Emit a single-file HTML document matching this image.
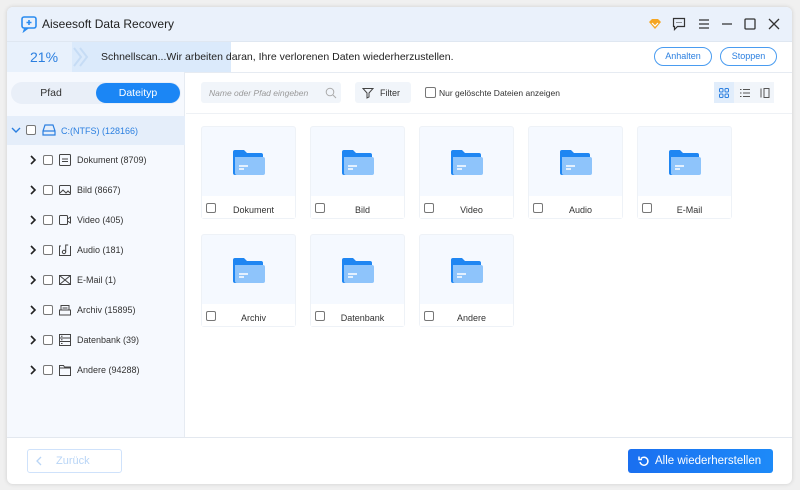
<!DOCTYPE html><html><head><style>
*{box-sizing:border-box;margin:0;padding:0}
body{width:800px;height:490px;background:#f0f0f0;font-family:"Liberation Sans",sans-serif;position:relative;overflow:hidden}
.win{position:absolute;left:7px;top:7px;width:785px;height:477px;background:#fff;border-radius:6px;overflow:hidden;box-shadow:0 0 4px rgba(0,0,0,.15)}
.a{position:absolute}
.cb{position:absolute;width:10px;height:10px;border:1px solid #777;border-radius:2px;background:#fff}
.side{left:0;top:65px;width:178px;height:365px;background:#f6f9fe;border-right:1px solid #e6ebf2}
.row{position:absolute;left:0;width:178px;height:30px;font-size:9px;color:#333}
.row span{position:absolute;top:10px}
.row .ch{position:absolute;left:22px;top:9px}
.card{position:absolute;width:95px;height:93px;background:#f5f9ff;border:1px solid #eef2f7;border-radius:3px}
.card .lb{position:absolute;left:0;right:0;bottom:0;height:22px;background:#fff;font-size:9px;color:#333;text-align:center;line-height:28px;padding-left:10px}
.card .cb{left:4px;top:6px}
</style></head><body>
<div class="win">
<div class="a" style="left:0;top:0;width:785px;height:35px;background:#eaf1fb;border-bottom:1px solid #dfe7f1"></div>
<svg class="a" style="left:13px;top:8px" width="18" height="18" viewBox="0 0 18 18"><rect x="2" y="2" width="14" height="11" rx="2" fill="none" stroke="#2b8cf0" stroke-width="1.6"/><path d="M9 5v5M6.5 7.5h5M5 13l-1 3 4-3" stroke="#2b8cf0" stroke-width="1.6" fill="none"/></svg>
<div class="a" style="left:35px;top:10px;font-size:12px;color:#222">Aiseesoft Data Recovery</div>
<svg class="a" style="left:640px;top:10px" width="16" height="14"><path d="M2 5l3-3h6l3 3-6 7z" fill="#f5a623"/><path d="M5 6l3 3 3-3" stroke="#fff" stroke-width="1.2" fill="none"/></svg>
<svg class="a" style="left:665px;top:10px" width="14" height="14"><path d="M1.5 1.5h11v8h-7l-3 3v-3h-1z" fill="none" stroke="#333" stroke-width="1.2"/><path d="M4.5 5.5h1M6.5 5.5h1M8.5 5.5h1" stroke="#333"/></svg>
<svg class="a" style="left:690px;top:10px" width="14" height="14"><path d="M2 3h10M2 7h10M2 11h10" stroke="#333" stroke-width="1.3"/></svg>
<svg class="a" style="left:713px;top:10px" width="14" height="14"><path d="M2 7h10" stroke="#333" stroke-width="1.3"/></svg>
<svg class="a" style="left:736px;top:10px" width="14" height="14"><rect x="2" y="2" width="10" height="10" rx="1" fill="none" stroke="#333" stroke-width="1.3"/></svg>
<svg class="a" style="left:760px;top:10px" width="14" height="14"><path d="M2 2l10 10M12 2L2 12" stroke="#333" stroke-width="1.3"/></svg>
<div class="a" style="left:0;top:35px;width:224px;height:30px;background:#dbeafb"></div>
<div class="a" style="left:0;top:35px;width:65px;height:30px;background:#e8f1fc"></div>
<div class="a" style="left:23px;top:42px;font-size:14px;color:#2b7fe0">21%</div>
<svg class="a" style="left:64px;top:35px" width="20" height="30"><path d="M3 6l7 9-7 9M9 6l7 9-7 9" stroke="#c6dcf5" stroke-width="2" fill="none"/></svg>
<div class="a" style="left:94px;top:44px;font-size:10.5px;color:#222">Schnellscan...Wir arbeiten daran, Ihre verlorenen Daten wiederherzustellen.</div>
<div class="a" style="left:647px;top:40px;width:58px;height:19px;border:1px solid #4a9cf0;border-radius:10px;font-size:9px;color:#2b7fe0;text-align:center;line-height:17px">Anhalten</div>
<div class="a" style="left:713px;top:40px;width:57px;height:19px;border:1px solid #4a9cf0;border-radius:10px;font-size:9px;color:#2b7fe0;text-align:center;line-height:17px">Stoppen</div>
<div class="a" style="left:0;top:65px;width:785px;height:1px;background:#e6ebf2"></div>
<div class="a side"></div>
<div class="a" style="left:4px;top:75px;width:170px;height:22px;background:#e9eff8;border-radius:11px"></div>
<div class="a" style="left:4px;top:75px;width:80px;height:22px;font-size:10.5px;color:#333;text-align:center;line-height:22px">Pfad</div>
<div class="a" style="left:89px;top:76px;width:84px;height:20px;background:#1b86f5;border-radius:10px;font-size:10.5px;color:#fff;text-align:center;line-height:20px">Dateityp</div>
<div class="a" style="left:0;top:109px;width:178px;height:29px;background:#e5eefa"></div>
<svg class="a" style="left:4px;top:119px" width="10" height="8"><path d="M1 2l4 4 4-4" stroke="#2b7fe0" stroke-width="1.4" fill="none"/></svg>
<div class="cb" style="left:19px;top:118px"></div>
<svg class="a" style="left:34px;top:116px" width="16" height="14"><path d="M2 8l2-6h8l2 6v4H2z M2 8h12" fill="none" stroke="#2b7fe0" stroke-width="1.2"/></svg>
<div class="a" style="left:54px;top:119px;font-size:9px;color:#2b7fe0">C:(NTFS) (128166)</div>
<div id="rows"></div>
<div class="a" style="left:194px;top:75px;width:140px;height:21px;background:#f1f5fa;border-radius:3px"></div>
<div class="a" style="left:202px;top:81px;font-size:8.5px;font-style:italic;color:#999">Name oder Pfad eingeben</div>
<svg class="a" style="left:318px;top:80px" width="12" height="12"><circle cx="5" cy="5" r="3.8" fill="none" stroke="#aaa"/><path d="M8 8l3 3" stroke="#aaa"/></svg>
<div class="a" style="left:348px;top:75px;width:56px;height:21px;background:#f1f5fa;border-radius:3px"></div>
<svg class="a" style="left:355px;top:80px" width="12" height="12"><path d="M1 1.5h10L7 6v4L5 11V6z" fill="none" stroke="#444"/></svg>
<div class="a" style="left:373px;top:81px;font-size:9px;color:#333">Filter</div>
<div class="cb" style="left:418px;top:80px;width:11px;height:11px"></div>
<div class="a" style="left:432px;top:81px;font-size:8.5px;color:#333">Nur gelöschte Dateien anzeigen</div>
<div class="a" style="left:707px;top:75px;width:60px;height:21px;background:#f1f5fa"></div>
<div class="a" style="left:707px;top:75px;width:20px;height:21px;background:#e1edfb"></div>
<svg class="a" style="left:711px;top:80px" width="12" height="12"><rect x="1.5" y="1.5" width="3.5" height="3.5" rx="1" fill="none" stroke="#2b7fe0"/><rect x="7" y="1.5" width="3.5" height="3.5" rx="1" fill="none" stroke="#2b7fe0"/><rect x="1.5" y="7" width="3.5" height="3.5" rx="1" fill="none" stroke="#2b7fe0"/><rect x="7" y="7" width="3.5" height="3.5" rx="1" fill="none" stroke="#2b7fe0"/></svg>
<svg class="a" style="left:732px;top:80px" width="12" height="12"><path d="M1 2.5h1.5M4 2.5h7M1 6h1.5M4 6h7M1 9.5h1.5M4 9.5h7" stroke="#555"/></svg>
<svg class="a" style="left:752px;top:80px" width="12" height="12"><path d="M2 1.5v9M5 1.5h5v9H5z" fill="none" stroke="#555"/></svg>
<div class="a" style="left:179px;top:106px;width:606px;height:1px;background:#eef1f5"></div>
<div id="cards"></div>
<div class="a" style="left:0;top:430px;width:785px;height:1px;background:#e3e8ef"></div>
<div class="a" style="left:20px;top:442px;width:95px;height:24px;border:1px solid #cfe2fb;border-radius:3px;font-size:11px;color:#b9d5f6;line-height:22px;padding-left:28px">Zurück</div>
<svg class="a" style="left:28px;top:449px" width="8" height="10"><path d="M6 1L2 5l4 4" stroke="#b9d5f6" stroke-width="1.3" fill="none"/></svg>
<div class="a" style="left:621px;top:442px;width:145px;height:24px;background:linear-gradient(90deg,#1a6ff0,#1d8af8);border-radius:3px;font-size:11.5px;color:#fff;line-height:24px;padding-left:27px">Alle wiederherstellen</div>
<svg class="a" style="left:631px;top:448px" width="12" height="12"><path d="M3 3.5A4 4 0 1 1 2 7" fill="none" stroke="#fff" stroke-width="1.5"/><path d="M1 1.5v3h3" fill="none" stroke="#fff" stroke-width="1.5"/></svg>
</div>
<script>
var icons=[
'<rect x="1.5" y="1.5" width="11" height="11" rx="1" fill="none" stroke="#444"/><path d="M4 6h6M4 8.5h6" stroke="#444"/>',
'<rect x="1.5" y="2.5" width="11" height="9" rx="1" fill="none" stroke="#444"/><path d="M2 10l3-3 3 3 2-2 2 2" stroke="#444" fill="none"/>',
'<rect x="1.5" y="2.5" width="8" height="9" rx="1" fill="none" stroke="#444"/><path d="M9.5 6l3-2v6l-3-2" stroke="#444" fill="none"/>',
'<path d="M3 3H1.5v9.5h11V3" fill="none" stroke="#444"/><circle cx="6" cy="9" r="1.7" fill="none" stroke="#444"/><path d="M7.7 9V2h2.5" stroke="#444" fill="none"/>',
'<rect x="1.5" y="2.5" width="11" height="9" fill="none" stroke="#444"/><path d="M1.5 2.5l11 9M12.5 2.5l-11 9" stroke="#444"/>',
'<path d="M3 7V2.5h8V7M1.5 7h11v5h-11z M4.5 5h5" fill="none" stroke="#444"/>',
'<rect x="1.5" y="1.5" width="11" height="11" fill="none" stroke="#444"/><path d="M1.5 5h11M1.5 8.5h11M3 3.3h1.5M3 6.8h1.5M3 10.5h1.5" stroke="#444"/>',
'<path d="M1.5 2.5h4l1 1.5h6v8.5h-11z M1.5 5h11" fill="none" stroke="#444"/>'];
var labels=["Dokument (8709)","Bild (8667)","Video (405)","Audio (181)","E-Mail (1)","Archiv (15895)","Datenbank (39)","Andere (94288)"],r="";
labels.forEach(function(t,i){r+='<div class="row" style="top:'+(138+i*30)+'px"><svg class="ch" width="8" height="12"><path d="M2 2l4 4-4 4" stroke="#222" stroke-width="1.6" fill="none"/></svg><div class="cb" style="left:36px;top:10px"></div><svg class="a" style="left:51px;top:8px" width="14" height="14">'+icons[i]+'</svg><span style="left:70px">'+t+'</span></div>';});
document.getElementById("rows").innerHTML=r;
var n=["Dokument","Bild","Video","Audio","E-Mail","Archiv","Datenbank","Andere"],h="";
n.forEach(function(t,i){var x=194+(i%5)*109,y=i<5?119:227;
h+='<div class="card" style="left:'+x+'px;top:'+y+'px"><svg class="a" style="left:30px;top:22px" width="34" height="28"><path d="M1 3a2 2 0 0 1 2-2h9l3 3h14a2 2 0 0 1 2 2v18a2 2 0 0 1-2 2H3a2 2 0 0 1-2-2z" fill="#1f86f2"/><path d="M3 8h28a2 2 0 0 1 2 2v14a2 2 0 0 1-2 2H5a2 2 0 0 1-2-2z" fill="#8ec4fb"/><path d="M7 17h9M7 20h5" stroke="#fff" stroke-width="1.5"/></svg><div class="lb">'+t+'</div><div class="cb" style="top:auto;bottom:5px"></div></div>';});
document.getElementById("cards").innerHTML=h;
</script>
</body></html>
